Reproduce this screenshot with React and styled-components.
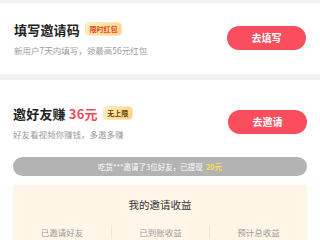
import React from "react";
import styled, { createGlobalStyle } from "styled-components";

const GlobalStyle = createGlobalStyle`
  html, body {
    margin: 0;
    padding: 0;
    background: #f2f2f2;
    font-family: "Noto Sans CJK SC", "Noto Sans", sans-serif;
  }
  body {
    width: 320px;
    height: 240px;
    overflow: hidden;
  }
`;

const Page = styled.div`
  display: flex;
  flex-direction: column;
  gap: 6px;
  padding-top: 3px;
`;

const Card = styled.div`
  background: #fff;
  padding: ${(p) => p.$pad};
`;

const TaskRow = styled.div`
  display: flex;
  align-items: center;
  justify-content: space-between;
`;

const TaskInfo = styled.div`
  display: flex;
  flex-direction: column;
  gap: 5px;
`;

const TitleLine = styled.div`
  display: flex;
  align-items: center;
  gap: 6px;
  height: 20px;
`;

const Title = styled.span`
  font-size: 13px;
  font-weight: 700;
  color: #222;
  letter-spacing: 0.2px;
`;

const Amount = styled.span`
  color: #ef4a5c;
  margin-left: 3px;
`;

const Badge = styled.span`
  display: inline-flex;
  align-items: center;
  height: 12px;
  padding: 0 3.5px;
  border-radius: 3px;
  font-size: 7px;
  font-weight: 700;
  color: ${(p) => p.$color};
  background: linear-gradient(135deg, #ffefbd 0%, #fbd27c 100%);
  box-shadow: 0 0 0 0.5px #f6cf86;
`;

const Sub = styled.div`
  font-size: 8.5px;
  color: #9a9a9a;
  line-height: 12px;
`;

const ActionButton = styled.button`
  width: 79px;
  height: 24px;
  border: none;
  border-radius: 12px;
  background: #fa4e5e;
  color: #fff;
  font-family: inherit;
  font-size: 10px;
  font-weight: 700;
  padding: 0;
`;

const Ticker = styled.div`
  margin-top: 17px;
  height: 19px;
  border-radius: 10px;
  background: #b3b3b3;
  color: #fff;
  font-size: 7.5px;
  display: flex;
  align-items: center;
  justify-content: center;
`;

const Highlight = styled.span`
  color: #f7e04b;
  font-weight: 700;
  margin-left: 3px;
`;

const Earnings = styled.div`
  margin-top: 9px;
  background: #fff6e8;
  padding-top: 13px;
  height: 60px;
`;

const EarnTitle = styled.div`
  text-align: center;
  font-size: 10.5px;
  color: #333;
  line-height: 14px;
`;

const Stats = styled.div`
  display: grid;
  grid-template-columns: repeat(3, 1fr);
  margin-top: 13px;
`;

const Stat = styled.div`
  text-align: center;
  font-size: 8.5px;
  color: #9a9a9a;
  line-height: 14px;
  border-left: ${(p) => (p.$first ? "none" : "1px solid #efe6d6")};
`;

export default function App() {
  return (
    <>
      <GlobalStyle />
      <Page>
        <Card $pad="16px 14px 18px">
          <TaskRow>
            <TaskInfo>
              <TitleLine>
                <Title>填写邀请码</Title>
                <Badge $color="#e2452b">限时红包</Badge>
              </TitleLine>
              <Sub>新用户7天内填写，领最高56元红包</Sub>
            </TaskInfo>
            <ActionButton>去填写</ActionButton>
          </TaskRow>
        </Card>
        <Card $pad="23px 13px 0 13px">
          <TaskRow>
            <TaskInfo>
              <TitleLine>
                <Title>
                  邀好友赚<Amount>36元</Amount>
                </Title>
                <Badge $color="#6b3a12">无上限</Badge>
              </TitleLine>
              <Sub>好友看视频你赚钱，多邀多赚</Sub>
            </TaskInfo>
            <ActionButton>去邀请</ActionButton>
          </TaskRow>
          <Ticker>
            吃货***邀请了3位好友，已提现<Highlight>20元</Highlight>
          </Ticker>
          <Earnings>
            <EarnTitle>我的邀请收益</EarnTitle>
            <Stats>
              <Stat $first>已邀请好友</Stat>
              <Stat>已到账收益</Stat>
              <Stat>预计总收益</Stat>
            </Stats>
          </Earnings>
        </Card>
      </Page>
    </>
  );
}
